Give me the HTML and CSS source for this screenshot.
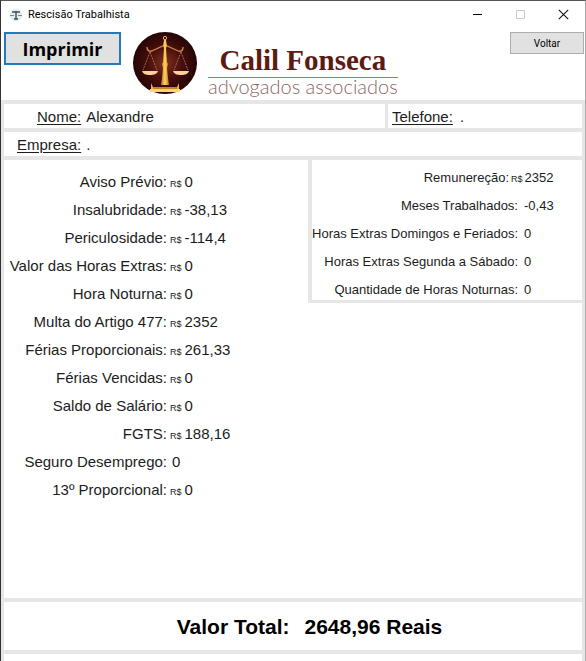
FILE: index.html
```html
<!DOCTYPE html>
<html lang="pt-BR">
<head>
<meta charset="utf-8">
<title>Rescisão Trabalhista</title>
<link rel="stylesheet" href="styles.css">
</head>
<body>
<div class="window">
  <header class="titlebar">
    <svg class="app-icon" viewBox="0 0 14 14" aria-hidden="true">
      <circle cx="7" cy="7" r="6.5" fill="#e4eeef"/>
      <path d="M3 4h8M7 3v8M5 11h4" stroke="#35545c" stroke-width="1.4" fill="none"/>
      <path d="M1 7.500h4M9 7.500h4" stroke="#a77" stroke-width="1.200"/>
    </svg>
    <h1 class="title">Rescisão Trabalhista</h1>
    <div class="controls">
      <button class="control" aria-label="Minimizar"><svg viewBox="0 0 11 11"><path d="M1 5.500h9" stroke="#000"/></svg></button>
      <button class="control" aria-label="Maximizar" disabled><svg viewBox="0 0 11 11"><path d="M1.500 1.500h8v8h-8z" stroke="#ccc" fill="none"/></svg></button>
      <button class="control" aria-label="Fechar"><svg viewBox="0 0 11 11"><path d="M.8.8l9.400 9.400M10.200.8L.8 10.200" stroke="#111" stroke-width="1.100"/></svg></button>
    </div>
  </header>

  <div class="toolbar">
    <button class="print">Imprimir</button>
    <div class="brand">
      <svg class="seal" viewBox="0 0 64 62" aria-hidden="true">
        <defs>
          <radialGradient id="glow"><stop offset="0" stop-color="#823020"/><stop offset=".5" stop-color="#4a100c"/><stop offset="1" stop-color="#240505"/></radialGradient>
          <linearGradient id="gold"><stop offset="0" stop-color="#b8721d"/><stop offset=".5" stop-color="#ffd65c"/><stop offset="1" stop-color="#b8721d"/></linearGradient>
        </defs>
        <ellipse cx="32" cy="31" rx="32" ry="31" fill="url(#glow)"/>
        <path d="M17 20L10 38M17 20l7 18M48 20l-7 18M48 20l7 18" stroke="#bd9068" stroke-width=".7" stroke-dasharray="2 1"/>
        <path d="M14 15c0 5 4 5 7 3l11-5 11 5c4 2 7 2 7-3" fill="none" stroke="#d58b45" stroke-width="1.300"/>
        <circle cx="32" cy="6" r="1.700" fill="none" stroke="#f0b84e"/>
        <path d="M31 8h2l1 6-1 2 1 14 1 2-1 4 1 10 1 7h-8l1-7 1-10-1-4 1-2 1-14-1-2z" fill="url(#gold)"/>
        <path d="M9 39h16c-1 3-4 4-8 4s-7-1-8-4zM40 39h16c-1 3-4 4-8 4s-7-1-8-4z" fill="#ffd19a"/>
        <path d="M18 51l2 4h24l2-4v8H18z" fill="#efaa38"/>
        <path d="M17 57h30v3H17z" fill="#ffd568"/>
        <path d="M20 56h24" stroke="#a15a18"/>
      </svg>
      <div class="wordmark">
        <span class="firm">Calil Fonseca</span>
        <span class="tagline">advogados associados</span>
      </div>
    </div>
    <button class="back">Voltar</button>
  </div>

  <main class="panels">
    <div class="client">
      <div class="cell name"><span class="key">Nome:</span><span>Alexandre</span></div>
      <div class="cell phone"><span class="key">Telefone:</span><span>.</span></div>
    </div>
    <div class="cell company"><span class="key">Empresa:</span><span>.</span></div>

    <div class="details">
      <dl class="amounts">
        <div class="row"><dt>Aviso Prévio:</dt><dd><small>R$</small>0</dd></div>
        <div class="row"><dt>Insalubridade:</dt><dd><small>R$</small>-38,13</dd></div>
        <div class="row"><dt>Periculosidade:</dt><dd><small>R$</small>-114,4</dd></div>
        <div class="row"><dt>Valor das Horas Extras:</dt><dd><small>R$</small>0</dd></div>
        <div class="row"><dt>Hora Noturna:</dt><dd><small>R$</small>0</dd></div>
        <div class="row"><dt>Multa do Artigo 477:</dt><dd><small>R$</small>2352</dd></div>
        <div class="row"><dt>Férias Proporcionais:</dt><dd><small>R$</small>261,33</dd></div>
        <div class="row"><dt>Férias Vencidas:</dt><dd><small>R$</small>0</dd></div>
        <div class="row"><dt>Saldo de Salário:</dt><dd><small>R$</small>0</dd></div>
        <div class="row"><dt>FGTS:</dt><dd><small>R$</small>188,16</dd></div>
        <div class="row"><dt>Seguro Desemprego:</dt><dd class="plain">0</dd></div>
        <div class="row"><dt>13º Proporcional:</dt><dd><small>R$</small>0</dd></div>
      </dl>
      <dl class="basis">
        <div class="row"><dt class="money">Remunereção:</dt><dd class="money"><small>R$</small>2352</dd></div>
        <div class="row"><dt>Meses Trabalhados:</dt><dd>-0,43</dd></div>
        <div class="row"><dt>Horas Extras Domingos e Feriados:</dt><dd>0</dd></div>
        <div class="row"><dt>Horas Extras Segunda a Sábado:</dt><dd>0</dd></div>
        <div class="row"><dt>Quantidade de Horas Noturnas:</dt><dd>0</dd></div>
      </dl>
    </div>

    <div class="total"><span>Valor Total:</span><span>2648,96 Reais</span></div>
    <div class="footer"></div>
  </main>
</div>
</body>
</html>
```

FILE: styles.css
```css
* {
  box-sizing: border-box;
}

body {
  margin: 0;
  background: #fff;
  color: #1c1c1c;
  font-family: "Liberation Sans", Arial, sans-serif;
  font-size: 15px;
}

button {
  font-family: inherit;
  color: #000;
  padding: 0;
}

.window {
  display: flex;
  flex-direction: column;
  min-height: 100vh;
  border-top: 1px solid #555;
  border-left: 1px solid #333;
  border-right: 1px solid #aaa;
}

.titlebar {
  display: flex;
  align-items: center;
  height: 27px;
  padding-left: 8px;
}

.app-icon {
  width: 14px;
  height: 14px;
}

.title {
  margin: 0 0 0 5px;
  font: 11px Roboto, sans-serif;
  color: #000;
}

.controls {
  display: flex;
  margin-left: auto;
}

.control {
  display: grid;
  place-items: center;
  width: 43px;
  height: 27px;
  border: 0;
  background: none;
}

.control svg {
  width: 11px;
  height: 11px;
}

.toolbar {
  display: flex;
  align-items: flex-start;
  height: 72px;
  padding: 4px 1px 0 3px;
}

.print {
  width: 117px;
  height: 33px;
  border: 2px solid #2878b4;
  background: #e1e1e1;
  font-family: "Open Sans", sans-serif;
  font-size: 18px;
  font-weight: 700;
  line-height: 24px;
}

.brand {
  display: flex;
  gap: 11px;
  margin-left: 12px;
}

.seal {
  width: 64px;
  height: 62px;
}

.wordmark {
  display: flex;
  flex-direction: column;
  align-items: center;
  padding-top: 11px;
}

.firm {
  color: #5c1a12;
  font-family: "Liberation Serif", serif;
  font-size: 29px;
  font-weight: 700;
  line-height: 34px;
}

.tagline {
  border-top: 1px solid #a27a72;
  color: #8b6763;
  font-family: Lato, sans-serif;
  font-size: 20px;
  font-weight: 300;
  line-height: 16px;
}

.back {
  width: 74px;
  height: 22px;
  margin-left: auto;
  border: 1px solid #adadad;
  background: #e1e1e1;
  font-family: Roboto, sans-serif;
  font-size: 10px;
}

.panels {
  display: flex;
  flex: 1;
  flex-direction: column;
  gap: 4px;
  padding: 4px 3px 0;
  background: #e6e6e6;
}

.client {
  display: grid;
  grid-template-columns: 381fr 194fr;
  gap: 3px;
}

.cell {
  display: flex;
  gap: 5px;
  height: 24px;
  background: #fff;
  line-height: 25px;
}

.key {
  text-decoration: underline;
  text-underline-offset: 2px;
}

.name {
  padding-left: 33px;
}

.phone {
  gap: 7px;
  padding-left: 4px;
}

.company {
  padding-left: 13px;
}

.details {
  display: grid;
  flex: 1;
  grid-template-columns: 305fr 273fr;
  align-items: start;
  background: #fff;
}

dl,
dd {
  margin: 0;
}

.row {
  display: grid;
  align-items: baseline;
  height: 28px;
  line-height: 28px;
}

.amounts {
  padding-top: 8px;
}

.amounts .row {
  grid-template-columns: 163px 1fr;
}

dt {
  text-align: right;
  white-space: nowrap;
}

dd {
  display: flex;
  align-items: baseline;
}

.amounts dd {
  gap: 3px;
  padding-left: 3px;
}

small {
  font-size: 9px;
}

.amounts .plain {
  padding-left: 5px;
}

.basis {
  padding-top: 4px;
  border-left: 4px solid #e6e6e6;
  border-bottom: 3px solid #e6e6e6;
  font-size: 13px;
}

.basis .row {
  grid-template-columns: 1fr 64px;
}

.basis .row:last-child {
  height: 24px;
}

.basis dd {
  padding-left: 6px;
}

.basis .money {
  margin-right: 9px;
  margin-left: -9px;
}

.basis dd.money {
  gap: 2px;
  padding-left: 2px;
}

.total {
  display: flex;
  justify-content: center;
  gap: 15px;
  height: 48px;
  padding-left: 33px;
  background: #fff;
  color: #000;
  font-size: 21px;
  font-weight: 700;
  line-height: 50px;
}

.footer {
  height: 7px;
  background: #fff;
}
```
